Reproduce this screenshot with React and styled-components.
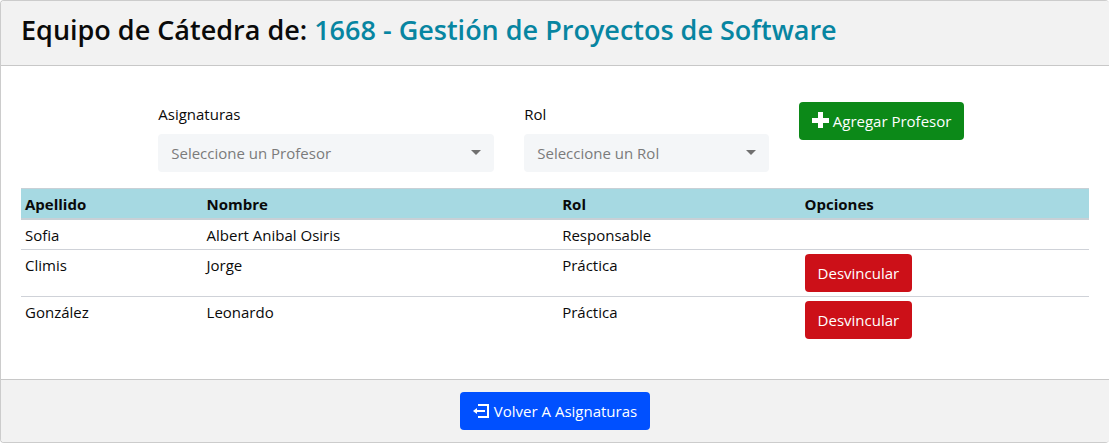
import React from "react";
import styled, { createGlobalStyle } from "styled-components";

const GlobalStyle = createGlobalStyle`
  *, *::before, *::after { box-sizing: border-box; }
  body {
    margin: 0;
    background: #fff;
    color: #0a0a0a;
    font-family: "Open Sans", "Noto Sans", sans-serif;
    font-size: 15px;
    line-height: 24px;
  }
`;

const Card = styled.main`
  border: 1px solid #ccc;
  border-right: 0;
  border-radius: 4px;
  overflow: hidden;
`;

const CardHeader = styled.header`
  padding: 12px 20px 18px;
  background: #f2f2f2;
  border-bottom: 1px solid #c8c8c8;
`;

const Title = styled.h1`
  margin: 0;
  font-size: 27px;
  font-weight: 600;
  line-height: 34px;
`;

const Subject = styled.span`
  color: #0785a1;
`;

const CardBody = styled.div`
  padding: 36px 20px;
`;

const FormRow = styled.form`
  display: flex;
  justify-content: center;
  margin: 0 -15px 16px;
`;

const Column = styled.div`
  flex: 0 0 calc(100% * ${(p) => p.$span} / 12);
  min-width: 0;
  padding: 0 15px;
  white-space: nowrap;
`;

const Label = styled.label`
  display: block;
  margin-bottom: 8px;
`;

const SelectBox = styled.div`
  position: relative;
`;

const Select = styled.select`
  display: block;
  width: 100%;
  height: 38px;
  padding: 0 36px 0 13px;
  appearance: none;
  border: 0;
  border-radius: 4px;
  background: #f4f6f8;
  color: #7b7b7b;
  font: inherit;
`;

const Caret = styled.svg`
  position: absolute;
  top: 16px;
  right: 13px;
  width: 10px;
  height: 5px;
  fill: #707070;
  pointer-events: none;
`;

const colors = { success: "#0c8918", danger: "#cc1018", primary: "#0050ff" };

const Button = styled.button`
  display: inline-flex;
  align-items: center;
  gap: 4px;
  height: 38px;
  padding: 0 13px;
  border: 0;
  border-radius: 4px;
  background: ${(p) => colors[p.$variant]};
  color: #fff;
  font: inherit;
  white-space: nowrap;
  vertical-align: top;
  cursor: pointer;
`;

const Icon = styled.svg`
  flex: none;
  width: 17px;
  height: 18px;
`;

const Table = styled.table`
  width: 100%;
  table-layout: fixed;
  border-collapse: collapse;
`;

const HeadCell = styled.th`
  width: ${(p) => p.$width};
  padding: 3px 4px 2px;
  background: #a6d9e2;
  border-top: 1px solid #c8d0d6;
  border-bottom: 2px solid #c8d0d6;
  text-align: left;
  font-weight: 700;
`;

const Row = styled.tr`
  border-top: 1px solid #cfd2d8;
`;

const Cell = styled.td`
  padding: 4px 4px 2px;
  line-height: 23px;
  vertical-align: top;
`;

const ActionCell = styled(Cell)`
  padding: 4px;
`;

const CardFooter = styled.footer`
  display: flex;
  justify-content: center;
  padding: 12px 20px;
  background: #f2f2f2;
  border-top: 1px solid #c8c8c8;
`;

const teachers = [
  { surname: "Sofia", name: "Albert Anibal Osiris", role: "Responsable" },
  { surname: "Climis", name: "Jorge", role: "Práctica", removable: true },
  { surname: "González", name: "Leonardo", role: "Práctica", removable: true },
];

function SelectField({ id, label, placeholder, span }) {
  return (
    <Column $span={span}>
      <Label htmlFor={id}>{label}</Label>
      <SelectBox>
        <Select id={id} defaultValue="">
          <option value="">{placeholder}</option>
        </Select>
        <Caret viewBox="0 0 10 5" aria-hidden="true">
          <path d="M0 0h10L5 5z" />
        </Caret>
      </SelectBox>
    </Column>
  );
}

export default function App() {
  return (
    <>
      <GlobalStyle />
      <Card>
        <CardHeader>
          <Title>
            Equipo de Cátedra de: <Subject>1668 - Gestión de Proyectos de Software</Subject>
          </Title>
        </CardHeader>
        <CardBody>
          <FormRow>
            <SelectField id="profesor" label="Asignaturas" placeholder="Seleccione un Profesor" span={4} />
            <SelectField id="rol" label="Rol" placeholder="Seleccione un Rol" span={3} />
            <Column $span={2}>
              <Button type="button" $variant="success">
                <Icon viewBox="0 0 17 18" aria-hidden="true">
                  <path d="M6 0h5v6h6v5h-6v5H6v-5H0V6h6z" fill="#fff" />
                </Icon>
                Agregar Profesor
              </Button>
            </Column>
          </FormRow>
          <Table>
            <thead>
              <tr>
                <HeadCell $width="17%">Apellido</HeadCell>
                <HeadCell $width="33.3%">Nombre</HeadCell>
                <HeadCell $width="22.7%">Rol</HeadCell>
                <HeadCell $width="27%">Opciones</HeadCell>
              </tr>
            </thead>
            <tbody>
              {teachers.map((t) => (
                <Row key={t.surname}>
                  <Cell>{t.surname}</Cell>
                  <Cell>{t.name}</Cell>
                  <Cell>{t.role}</Cell>
                  <ActionCell>
                    {t.removable && (
                      <Button type="button" $variant="danger">Desvincular</Button>
                    )}
                  </ActionCell>
                </Row>
              ))}
            </tbody>
          </Table>
        </CardBody>
        <CardFooter>
          <Button type="button" $variant="primary">
            <Icon viewBox="0 0 17 18" aria-hidden="true">
              <path d="M6 4V3h9v12H6v-1" fill="none" stroke="#fff" strokeWidth="2" />
              <path d="M3 9h9" fill="none" stroke="#fff" strokeWidth="2" />
              <path d="M0 9l4-3v6z" fill="#fff" />
            </Icon>
            Volver A Asignaturas
          </Button>
        </CardFooter>
      </Card>
    </>
  );
}
